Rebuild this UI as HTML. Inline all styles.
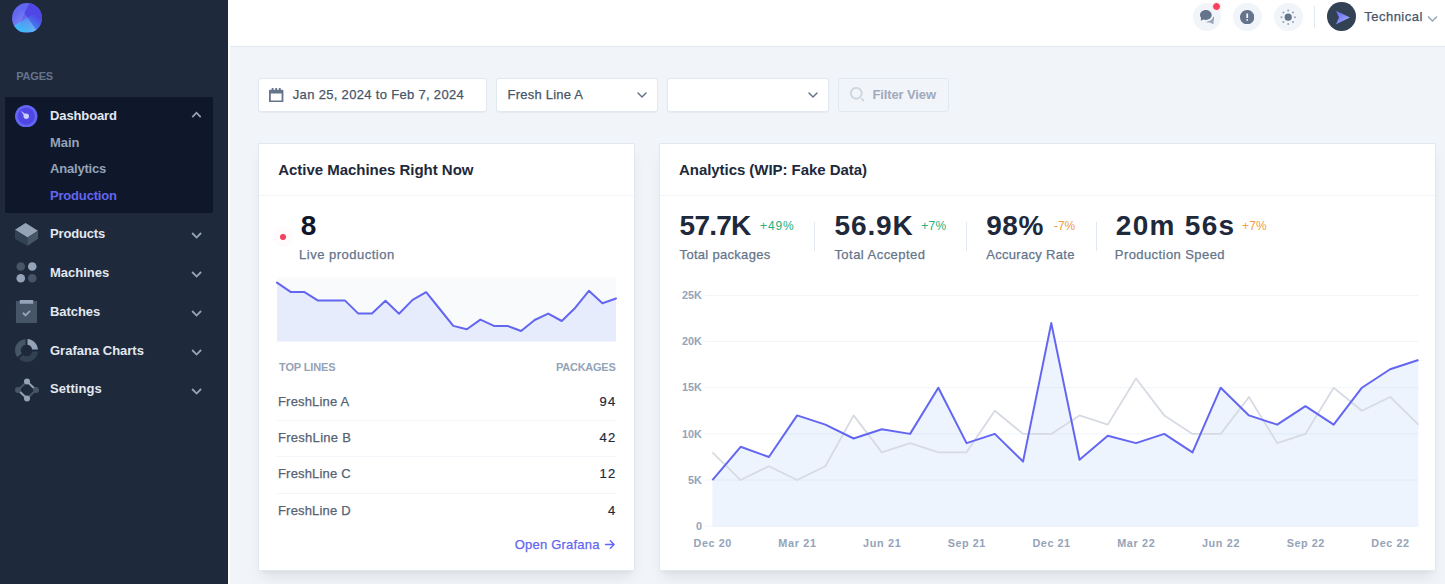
<!DOCTYPE html>
<html><head><meta charset="utf-8"><title>Dashboard</title>
<style>
html,body{margin:0;padding:0;width:1445px;height:584px;overflow:hidden;background:#f1f5f9;font-family:'Liberation Sans', sans-serif;}
.a{position:absolute;display:block}
.t{position:absolute;white-space:nowrap;line-height:1;font-family:'Liberation Sans', sans-serif}
</style></head><body>
<!-- sidebar -->
<div class=a style="left:0;top:0;width:228px;height:584px;background:#1e293b"></div>
<div class=a style="left:228px;top:0;width:2px;height:584px;background:#fff"></div>
<!-- logo -->
<svg class=a style="left:12.3px;top:2.5px" width="30" height="30" viewBox="0 0 32 32">
<defs>
<linearGradient x1="28.538%" y1="20.229%" x2="100%" y2="108.156%" id="la"><stop stop-color="#A5B4FC" stop-opacity="0" offset="0%"/><stop stop-color="#A5B4FC" offset="100%"/></linearGradient>
<linearGradient x1="88.638%" y1="29.267%" x2="22.42%" y2="100%" id="lb"><stop stop-color="#38BDF8" stop-opacity="0" offset="0%"/><stop stop-color="#38BDF8" offset="100%"/></linearGradient>
<clipPath id="lc"><rect x="0" y="0" width="32" height="31.2"/></clipPath>
</defs>
<g clip-path="url(#lc)">
<rect fill="#6366F1" width="32" height="32" rx="16"/>
<path d="M18.277.16C26.035 1.267 32 7.938 32 16c0 8.837-7.163 16-16 16a15.937 15.937 0 01-10.426-3.863L18.277.161z" fill="#4F46E5"/>
<path d="M7.404 2.503l18.339 26.19A15.93 15.93 0 0116 32C7.163 32 0 24.837 0 16 0 10.327 2.952 5.344 7.404 2.503z" fill="url(#la)"/>
<path d="M2.223 24.14L29.777 7.86A15.926 15.926 0 0132 16c0 8.837-7.163 16-16 16-5.864 0-10.991-3.154-13.777-7.86z" fill="url(#lb)"/>
</g></svg>
<!-- active group box -->
<div class=a style="left:5px;top:97px;width:208px;height:116px;background:#0f172a;border-radius:1px"></div>
<!-- dashboard icon -->
<svg class=a style="left:15.3px;top:104.9px" width="22.5" height="22.5" viewBox="0 0 24 24">
<path fill="#6366f1" d="M12 0C5.383 0 0 5.383 0 12s5.383 12 12 12 12-5.383 12-12S18.617 0 12 0z"/>
<path fill="#4f46e5" d="M12 3c-4.963 0-9 4.037-9 9s4.037 9 9 9 9-4.037 9-9-4.037-9-9-9z"/>
<path fill="#c7d2fe" d="M12 15c-1.654 0-3-1.346-3-3 0-.462.113-.894.3-1.285L6 6l4.714 3.301A2.973 2.973 0 0112 9c1.654 0 3 1.346 3 3s-1.346 3-3 3z"/>
</svg>
<svg class=a style="left:191px;top:111px" width="10.8" height="10.8" viewBox="0 0 12 12"><path fill="#94a3b8" d="M5.9 11.4L.5 6l1.4-1.4 4 4 4-4L11.3 6z" transform="rotate(180 6 6)"/></svg>
<!-- products cube -->
<svg class=a style="left:15px;top:222.5px" width="23" height="23" viewBox="0 0 24 24">
<path fill="#94a3b8" d="M13 15l11-7L11.504.136a1 1 0 00-1.019.007L0 7l13 8z"/>
<path fill="#334155" d="M13 15L0 7v9c0 .355.189.685.496.864L13 24v-9z"/>
<path fill="#475569" d="M13 15.047V24l10.573-7.181A.999.999 0 0024 16V8l-11 7.047z"/>
</svg>
<!-- machines dots -->
<svg class=a style="left:15px;top:261px" width="23" height="23" viewBox="0 0 24 24">
<circle fill="#475569" cx="6" cy="5.8" r="4.5"/><circle fill="#94a3b8" cx="18" cy="5.8" r="4.5"/>
<circle fill="#94a3b8" cx="6" cy="18" r="4.5"/><circle fill="#475569" cx="18" cy="18" r="4.5"/>
</svg>
<!-- batches clipboard -->
<svg class=a style="left:15px;top:300px" width="23" height="23" viewBox="0 0 24 24">
<path fill="#475569" d="M1 1h22v23H1z"/>
<path fill="#94a3b8" d="M15 10.586L16.414 12 11 17.414 7.586 14 9 12.586l2 2zM5 0h14v4H5z"/>
</svg>
<!-- grafana donut -->
<svg class=a style="left:15px;top:339px" width="23" height="23" viewBox="0 0 24 24">
<path fill="#94a3b8" d="M13 6.068a6.035 6.035 0 0 1 4.932 4.933H24c-.486-5.846-5.154-10.515-11-11v6.067Z"/>
<path fill="#334155" d="M18.007 13c-.474 2.833-2.919 5-5.864 5a5.888 5.888 0 0 1-3.694-1.304L4 20.731C6.131 22.752 8.992 24 12.143 24c6.232 0 11.35-4.851 11.857-11h-5.993Z"/>
<path fill="#475569" d="M6.939 15.007A5.861 5.861 0 0 1 6 11.829c0-2.937 2.167-5.376 5-5.85V0C4.85.507 0 5.614 0 11.83c0 2.695.922 5.174 2.456 7.17l4.483-3.993Z"/>
</svg>
<!-- settings -->
<svg class=a style="left:15px;top:378px" width="24" height="24" viewBox="0 0 24 24">
<g stroke-width="2">
<line x1="3" y1="12" x2="12" y2="3.5" stroke="#475569"/><line x1="21" y1="12" x2="12" y2="20.5" stroke="#475569"/>
<line x1="12" y1="3.5" x2="21" y2="12" stroke="#94a3b8"/><line x1="3" y1="12" x2="12" y2="20.5" stroke="#94a3b8"/>
</g>
<circle fill="#475569" cx="3" cy="12" r="3"/><circle fill="#475569" cx="21" cy="12" r="3"/>
<circle fill="#94a3b8" cx="12" cy="3.5" r="3"/><circle fill="#94a3b8" cx="12" cy="20.5" r="3"/>
</svg>
<svg class=a style='left:190.8px;top:228.29999999999998px' width='11.399999999999999' height='11.399999999999999' viewBox='0 0 12 12'><path fill='#94a3b8' d='M5.9 11.4L.5 6l1.4-1.4 4 4 4-4L11.3 6z'/></svg><svg class=a style='left:190.8px;top:267.3px' width='11.399999999999999' height='11.399999999999999' viewBox='0 0 12 12'><path fill='#94a3b8' d='M5.9 11.4L.5 6l1.4-1.4 4 4 4-4L11.3 6z'/></svg><svg class=a style='left:190.8px;top:306.3px' width='11.399999999999999' height='11.399999999999999' viewBox='0 0 12 12'><path fill='#94a3b8' d='M5.9 11.4L.5 6l1.4-1.4 4 4 4-4L11.3 6z'/></svg><svg class=a style='left:190.8px;top:345.3px' width='11.399999999999999' height='11.399999999999999' viewBox='0 0 12 12'><path fill='#94a3b8' d='M5.9 11.4L.5 6l1.4-1.4 4 4 4-4L11.3 6z'/></svg><svg class=a style='left:190.8px;top:384.3px' width='11.399999999999999' height='11.399999999999999' viewBox='0 0 12 12'><path fill='#94a3b8' d='M5.9 11.4L.5 6l1.4-1.4 4 4 4-4L11.3 6z'/></svg>

<!-- header -->
<div class=a style="left:230px;top:0;width:1215px;height:46px;background:#fff;border-bottom:1px solid #e2e8f0"></div>
<div class=a style="left:1192.6px;top:2.6px;width:28.8px;height:28.8px;border-radius:50%;background:#f1f5f9"></div>
<svg class=a style="left:1199.6px;top:9.6px" width="14.4" height="14.4" viewBox="0 0 16 16">
<path fill="#64748b" d="M6.5 0C2.91 0 0 2.462 0 5.5c0 1.075.37 2.074 1 2.922V12l2.699-1.542A7.454 7.454 0 006.5 11c3.59 0 6.5-2.462 6.5-5.5S10.09 0 6.5 0z"/>
<path fill="#94a3b8" d="M16 9.5c0-.987-.429-1.897-1.147-2.639C14.124 10.348 10.66 13 6.5 13c-.103 0-.202-.018-.305-.021C7.231 13.617 8.556 14 10 14c.449 0 .886-.04 1.307-.11L15 16v-4h-.012C15.627 11.285 16 10.425 16 9.5z"/>
</svg>
<div class=a style="left:1211.8px;top:2.3px;width:7.2px;height:7.2px;border-radius:50%;background:#f43f5e;border:1.3px solid #fff"></div>
<div class=a style="left:1232.9px;top:2.6px;width:28.8px;height:28.8px;border-radius:50%;background:#f1f5f9"></div>
<svg class=a style="left:1240.1px;top:9.6px" width="14.4" height="14.4" viewBox="0 0 16 16">
<path fill="#64748b" d="M8 0C3.6 0 0 3.6 0 8s3.6 8 8 8 8-3.6 8-8-3.6-8-8-8zm1 9H7V4h2v5zm-1 3c-.6 0-1-.4-1-1s.4-1 1-1 1 .4 1 1-.4 1-1 1z"/>
</svg>
<div class=a style="left:1274.2px;top:2.6px;width:28.8px;height:28.8px;border-radius:50%;background:#f1f5f9"></div>
<svg class=a style="left:1281.4px;top:9.6px;overflow:visible" width="14.4" height="14.4" viewBox="0 0 16 16">
<g fill="#94a3b8"><circle cx="8" cy="0.5" r="1.15"/><circle cx="8" cy="15.5" r="1.15"/><circle cx="0.5" cy="8" r="1.15"/><circle cx="15.5" cy="8" r="1.15"/>
<circle cx="2.7" cy="2.7" r="1.15"/><circle cx="13.3" cy="2.7" r="1.15"/><circle cx="2.7" cy="13.3" r="1.15"/><circle cx="13.3" cy="13.3" r="1.15"/></g>
<circle fill="#64748b" cx="8" cy="8" r="4"/>
</svg>
<div class=a style="left:1314.2px;top:6px;width:1px;height:21.6px;background:#e2e8f0"></div>
<div class=a style="left:1327px;top:2.1px;width:28.8px;height:28.8px;border-radius:50%;background:#334155"></div>
<svg class=a style="left:1335px;top:9.5px" width="16" height="15" viewBox="0 0 16 15">
<defs><linearGradient id="pa" x1="0" y1="0" x2="1" y2="1"><stop offset="0" stop-color="#6366f1"/><stop offset="1" stop-color="#a5b4fc"/></linearGradient></defs>
<path fill="url(#pa)" d="M1 0.7L15 7.5 1 14.3 4 7.5z"/>
</svg>
<svg class=a style="left:1427px;top:15px" width="11" height="8" viewBox="0 0 11 8"><path d="M1 1.5l4.5 4.5 4.5-4.5" fill="none" stroke="#94a3b8" stroke-width="1.4"/></svg>

<!-- filters -->
<div class=a style="left:258px;top:77.5px;width:227.3px;height:32.5px;background:#fff;border:1px solid #e2e8f0;border-radius:3px;box-shadow:0 1px 1px rgba(0,0,0,0.04)"></div>
<svg class=a style="left:269.2px;top:87.5px" width="14.4" height="14.4" viewBox="0 0 16 16"><path fill="#64748b" d="M15 2h-2V0h-2v2H9V0H7v2H5V0H3v2H1a1 1 0 00-1 1v12a1 1 0 001 1h14a1 1 0 001-1V3a1 1 0 00-1-1zm-1 12H2V6h12v8z"/></svg>
<div class=a style="left:496.3px;top:77.5px;width:159.7px;height:32.5px;background:#fff;border:1px solid #e2e8f0;border-radius:3px;box-shadow:0 1px 1px rgba(0,0,0,0.04)"></div>
<svg class=a style="left:632px;top:84.5px" width="20" height="20" viewBox="0 0 20 20"><path d="M6 8l4 4 4-4" fill="none" stroke="#64748b" stroke-width="1.5" stroke-linecap="round" stroke-linejoin="round"/></svg>
<div class=a style="left:667px;top:77.5px;width:159.8px;height:32.5px;background:#fff;border:1px solid #e2e8f0;border-radius:3px;box-shadow:0 1px 1px rgba(0,0,0,0.04)"></div>
<svg class=a style="left:802.8px;top:84.5px" width="20" height="20" viewBox="0 0 20 20"><path d="M6 8l4 4 4-4" fill="none" stroke="#64748b" stroke-width="1.5" stroke-linecap="round" stroke-linejoin="round"/></svg>
<div class=a style="left:838px;top:77.5px;width:108.8px;height:32.9px;border:1px solid #e2e8f0;border-radius:3px"></div>
<svg class=a style="left:850px;top:87.2px" width="14.4" height="14.4" viewBox="0 0 16 16"><path fill="#cbd5e1" d="M7 14c-3.86 0-7-3.14-7-7s3.14-7 7-7 7 3.14 7 7-3.14 7-7 7zM7 2C4.243 2 2 4.243 2 7s2.243 5 5 5 5-2.243 5-5-2.243-5-5-5z"/><path fill="#cbd5e1" d="M15.707 14.293L13.314 11.9a8.019 8.019 0 01-1.414 1.414l2.393 2.393a.997.997 0 001.414 0 .999.999 0 000-1.414z"/></svg>

<!-- cards -->
<div class=a style="left:257.6px;top:142.6px;width:375.4px;height:426.4px;background:#fff;border:1px solid #e2e8f0;border-radius:1px;box-shadow:0 9px 13px -3px rgba(0,0,0,0.08),0 4px 5px -4px rgba(0,0,0,0.08)"></div>
<div class=a style="left:259px;top:195px;width:375px;height:1px;background:#f1f5f9"></div>
<div class=a style="left:658.6px;top:142.6px;width:775.4px;height:426.4px;background:#fff;border:1px solid #e2e8f0;border-radius:1px;box-shadow:0 9px 13px -3px rgba(0,0,0,0.08),0 4px 5px -4px rgba(0,0,0,0.08)"></div>
<div class=a style="left:660px;top:195px;width:775px;height:1px;background:#f1f5f9"></div>

<!-- live dot -->
<div class=a style="left:273.3px;top:226.7px;width:20px;height:20px;border-radius:50%;background:rgba(244,63,94,0.025)"></div>
<div class=a style="left:280.3px;top:233.7px;width:6px;height:6px;border-radius:50%;background:#f43f5e"></div>

<!-- sparkline -->
<svg class=a style="left:0;top:0" width="1445" height="584">
<rect x="277" y="277.5" width="339" height="64" fill="#f8fafc"/>
<path d="M277,341.5 L277.00,282.60 L290.56,291.90 L304.12,291.90 L317.68,300.40 L331.24,300.40 L344.80,300.40 L358.36,313.60 L371.92,313.60 L385.48,300.80 L399.04,313.80 L412.60,299.90 L426.16,292.20 L439.72,309.00 L453.28,325.90 L466.84,329.20 L480.40,319.60 L493.96,325.90 L507.52,325.90 L521.08,331.00 L534.64,320.00 L548.20,313.60 L561.76,321.00 L575.32,307.70 L588.88,290.80 L602.44,303.20 L616.00,298.50 L616,341.5 Z" fill="#e6ecfb"/>
<polyline points="277.00,282.60 290.56,291.90 304.12,291.90 317.68,300.40 331.24,300.40 344.80,300.40 358.36,313.60 371.92,313.60 385.48,300.80 399.04,313.80 412.60,299.90 426.16,292.20 439.72,309.00 453.28,325.90 466.84,329.20 480.40,319.60 493.96,325.90 507.52,325.90 521.08,331.00 534.64,320.00 548.20,313.60 561.76,321.00 575.32,307.70 588.88,290.80 602.44,303.20 616.00,298.50" fill="none" stroke="#6366f1" stroke-width="2" stroke-linejoin="round" stroke-linecap="round"/>
<path d="M605.5 544.5h8.6M610.3 540.7l3.8 3.8-3.8 3.8" fill="none" stroke="#6366f1" stroke-width="1.4" stroke-linecap="round" stroke-linejoin="round"/>
<line x1="277" x2="616" y1="420.5" y2="420.5" stroke="#f1f5f9"/>
<line x1="277" x2="616" y1="456.5" y2="456.5" stroke="#f1f5f9"/>
<line x1="277" x2="616" y1="493.5" y2="493.5" stroke="#f1f5f9"/>
<!-- kpi dividers -->
<rect x="814" y="222" width="1" height="29" fill="#e2e8f0"/>
<rect x="966" y="222" width="1" height="29" fill="#e2e8f0"/>
<rect x="1096" y="222" width="1" height="29" fill="#e2e8f0"/>
<!-- chart -->
<line x1='705' x2='1418.4' y1='295.40' y2='295.40' stroke='#f1f5f9' stroke-width='1'/><line x1='705' x2='1418.4' y1='341.56' y2='341.56' stroke='#f1f5f9' stroke-width='1'/><line x1='705' x2='1418.4' y1='387.72' y2='387.72' stroke='#f1f5f9' stroke-width='1'/><line x1='705' x2='1418.4' y1='433.88' y2='433.88' stroke='#f1f5f9' stroke-width='1'/><line x1='705' x2='1418.4' y1='480.04' y2='480.04' stroke='#f1f5f9' stroke-width='1'/><line x1='705' x2='1418.4' y1='526.20' y2='526.20' stroke='#f1f5f9' stroke-width='1'/>
<path d="M712.4,526.2 L712.40,480.04 L740.64,446.80 L768.88,456.96 L797.12,415.42 L825.36,424.65 L853.60,438.50 L881.84,429.26 L910.08,433.88 L938.32,387.72 L966.56,443.11 L994.80,433.88 L1023.04,461.58 L1051.28,323.10 L1079.52,459.73 L1107.76,435.73 L1136.00,443.11 L1164.24,433.88 L1192.48,452.34 L1220.72,387.72 L1248.96,415.42 L1277.20,424.65 L1305.44,406.18 L1333.68,424.65 L1361.92,387.72 L1390.16,369.26 L1418.40,360.02 L1418.40,526.2 Z" fill="rgba(59,130,246,0.09)"/>
<polyline points="712.40,452.34 740.64,480.04 768.88,466.19 797.12,480.04 825.36,466.19 853.60,415.42 881.84,452.34 910.08,443.11 938.32,452.34 966.56,452.34 994.80,410.80 1023.04,433.88 1051.28,433.88 1079.52,415.42 1107.76,424.65 1136.00,378.49 1164.24,415.42 1192.48,433.88 1220.72,433.88 1248.96,396.95 1277.20,443.11 1305.44,433.88 1333.68,387.72 1361.92,410.80 1390.16,396.95 1418.40,424.65" fill="none" stroke="#d6dbe3" stroke-width="1.8" stroke-linejoin="round"/>
<polyline points="712.40,480.04 740.64,446.80 768.88,456.96 797.12,415.42 825.36,424.65 853.60,438.50 881.84,429.26 910.08,433.88 938.32,387.72 966.56,443.11 994.80,433.88 1023.04,461.58 1051.28,323.10 1079.52,459.73 1107.76,435.73 1136.00,443.11 1164.24,433.88 1192.48,452.34 1220.72,387.72 1248.96,415.42 1277.20,424.65 1305.44,406.18 1333.68,424.65 1361.92,387.72 1390.16,369.26 1418.40,360.02" fill="none" stroke="#6366f1" stroke-width="2" stroke-linejoin="round"/>
</svg>

<div class=t style="left:16.20px;top:71.29px;font-weight:bold;font-size:11px;color:#64748b;letter-spacing:-0.189px;">PAGES</div><div class=t style="left:50.00px;top:109.00px;font-weight:bold;font-size:13px;color:#e2e8f0;letter-spacing:-0.12px;">Dashboard</div><div class=t style="left:50.00px;top:135.80px;font-weight:bold;font-size:13px;color:#94a3b8;letter-spacing:-0.09px;">Main</div><div class=t style="left:50.00px;top:162.00px;font-weight:bold;font-size:13px;color:#94a3b8;letter-spacing:-0.196px;">Analytics</div><div class=t style="left:50.00px;top:189.00px;font-weight:bold;font-size:13px;color:#6366f1;letter-spacing:-0.185px;">Production</div><div class=t style="left:50.00px;top:226.60px;font-weight:bold;font-size:13px;color:#e2e8f0;letter-spacing:-0.159px;">Products</div><div class=t style="left:50.00px;top:265.90px;font-weight:bold;font-size:13px;color:#e2e8f0;letter-spacing:-0.002px;">Machines</div><div class=t style="left:50.00px;top:305.00px;font-weight:bold;font-size:13px;color:#e2e8f0;letter-spacing:-0.058px;">Batches</div><div class=t style="left:50.00px;top:343.50px;font-weight:bold;font-size:13px;color:#e2e8f0;letter-spacing:0.001px;">Grafana Charts</div><div class=t style="left:50.00px;top:382.40px;font-weight:bold;font-size:13px;color:#e2e8f0;letter-spacing:0.05px;">Settings</div><div class=t style="left:1364.30px;top:9.80px;font-weight:normal;font-size:13px;color:#475569;letter-spacing:0.474px;-webkit-text-stroke:0.25px currentColor">Technical</div><div class=t style="left:292.80px;top:87.90px;font-weight:normal;font-size:13px;color:#475569;letter-spacing:0.319px;-webkit-text-stroke:0.25px currentColor">Jan 25, 2024 to Feb 7, 2024</div><div class=t style="left:507.50px;top:87.90px;font-weight:normal;font-size:13px;color:#475569;letter-spacing:0.224px;-webkit-text-stroke:0.25px currentColor">Fresh Line A</div><div class=t style="left:872.40px;top:87.80px;font-weight:bold;font-size:13px;color:#a1a9bd;letter-spacing:-0.107px;">Filter View</div><div class=t style="left:278.20px;top:161.60px;font-weight:bold;font-size:15px;color:#1e293b;letter-spacing:-0.025px;">Active Machines Right Now</div><div class=t style="left:300.80px;top:212.20px;font-weight:bold;font-size:28px;color:#0f172a;letter-spacing:0.0px;">8</div><div class=t style="left:299.00px;top:248.20px;font-weight:normal;font-size:13px;color:#64748b;letter-spacing:0.504px;-webkit-text-stroke:0.25px currentColor">Live production</div><div class=t style="left:279.00px;top:362.29px;font-weight:bold;font-size:11px;color:#94a3b8;letter-spacing:-0.128px;">TOP LINES</div><div class=t style="left:556.00px;top:362.29px;font-weight:bold;font-size:11px;color:#94a3b8;letter-spacing:-0.256px;">PACKAGES</div><div class=t style="left:278.00px;top:394.80px;font-weight:normal;font-size:13px;color:#556274;letter-spacing:0.178px;-webkit-text-stroke:0.25px currentColor">FreshLine A</div><div class=t style="left:599.60px;top:394.80px;font-weight:normal;font-size:13px;color:#1e293b;letter-spacing:1.17px;-webkit-text-stroke:0.2px currentColor">94</div><div class=t style="left:278.00px;top:430.60px;font-weight:normal;font-size:13px;color:#556274;letter-spacing:0.278px;-webkit-text-stroke:0.25px currentColor">FreshLine B</div><div class=t style="left:599.60px;top:430.60px;font-weight:normal;font-size:13px;color:#1e293b;letter-spacing:1.17px;-webkit-text-stroke:0.2px currentColor">42</div><div class=t style="left:278.00px;top:467.20px;font-weight:normal;font-size:13px;color:#556274;letter-spacing:0.178px;-webkit-text-stroke:0.25px currentColor">FreshLine C</div><div class=t style="left:599.60px;top:467.20px;font-weight:normal;font-size:13px;color:#1e293b;letter-spacing:1.17px;-webkit-text-stroke:0.2px currentColor">12</div><div class=t style="left:278.00px;top:503.70px;font-weight:normal;font-size:13px;color:#556274;letter-spacing:0.178px;-webkit-text-stroke:0.25px currentColor">FreshLine D</div><div class=t style="left:608.00px;top:503.70px;font-weight:normal;font-size:13px;color:#1e293b;letter-spacing:0.0px;-webkit-text-stroke:0.2px currentColor">4</div><div class=t style="left:514.80px;top:538.00px;font-weight:normal;font-size:13px;color:#6366f1;letter-spacing:0.204px;-webkit-text-stroke:0.25px currentColor">Open Grafana</div><div class=t style="left:679.00px;top:161.60px;font-weight:bold;font-size:15px;color:#1e293b;letter-spacing:-0.049px;">Analytics (WIP: Fake Data)</div><div class=t style="left:679.60px;top:212.30px;font-weight:bold;font-size:28px;color:#1e293b;letter-spacing:-0.774px;">57.7K</div><div class=t style="left:760.00px;top:219.84px;font-weight:normal;font-size:12px;color:#25b07c;letter-spacing:0.882px;">+49%</div><div class=t style="left:679.60px;top:248.40px;font-weight:normal;font-size:13px;color:#64748b;letter-spacing:0.298px;-webkit-text-stroke:0.25px currentColor">Total packages</div><div class=t style="left:834.40px;top:212.30px;font-weight:bold;font-size:28px;color:#1e293b;letter-spacing:0.926px;">56.9K</div><div class=t style="left:921.30px;top:219.84px;font-weight:normal;font-size:12px;color:#25b07c;letter-spacing:0.259px;">+7%</div><div class=t style="left:834.40px;top:248.40px;font-weight:normal;font-size:13px;color:#64748b;letter-spacing:0.466px;-webkit-text-stroke:0.25px currentColor">Total Accepted</div><div class=t style="left:986.20px;top:212.30px;font-weight:bold;font-size:28px;color:#1e293b;letter-spacing:0.528px;">98%</div><div class=t style="left:1054.00px;top:219.84px;font-weight:normal;font-size:12px;color:#f09c45;letter-spacing:-0.085px;">-7%</div><div class=t style="left:986.20px;top:248.40px;font-weight:normal;font-size:13px;color:#64748b;letter-spacing:0.308px;-webkit-text-stroke:0.25px currentColor">Accuracy Rate</div><div class=t style="left:1115.80px;top:212.30px;font-weight:bold;font-size:28px;color:#1e293b;letter-spacing:1.289px;">20m 56s</div><div class=t style="left:1242.00px;top:219.84px;font-weight:normal;font-size:12px;color:#f09c45;letter-spacing:0.159px;">+7%</div><div class=t style="left:1114.80px;top:248.40px;font-weight:normal;font-size:13px;color:#64748b;letter-spacing:0.425px;-webkit-text-stroke:0.25px currentColor">Production Speed</div><div class=t style="left:681.99px;top:290.16px;font-weight:bold;font-size:10.8px;color:#94a3b8;letter-spacing:0.0px;">25K</div><div class=t style="left:681.99px;top:336.32px;font-weight:bold;font-size:10.8px;color:#94a3b8;letter-spacing:0.0px;">20K</div><div class=t style="left:681.99px;top:382.48px;font-weight:bold;font-size:10.8px;color:#94a3b8;letter-spacing:0.0px;">15K</div><div class=t style="left:681.99px;top:428.64px;font-weight:bold;font-size:10.8px;color:#94a3b8;letter-spacing:0.0px;">10K</div><div class=t style="left:688.00px;top:474.80px;font-weight:bold;font-size:10.8px;color:#94a3b8;letter-spacing:0.0px;">5K</div><div class=t style="left:696.00px;top:520.96px;font-weight:bold;font-size:10.8px;color:#94a3b8;letter-spacing:0.0px;">0</div><div class=t style="left:693.60px;top:538.26px;font-weight:bold;font-size:10.8px;color:#94a3b8;letter-spacing:0.558px;">Dec 20</div><div class=t style="left:778.32px;top:538.26px;font-weight:bold;font-size:10.8px;color:#94a3b8;letter-spacing:0.679px;">Mar 21</div><div class=t style="left:863.04px;top:538.26px;font-weight:bold;font-size:10.8px;color:#94a3b8;letter-spacing:0.68px;">Jun 21</div><div class=t style="left:947.76px;top:538.26px;font-weight:bold;font-size:10.8px;color:#94a3b8;letter-spacing:0.559px;">Sep 21</div><div class=t style="left:1032.48px;top:538.26px;font-weight:bold;font-size:10.8px;color:#94a3b8;letter-spacing:0.558px;">Dec 21</div><div class=t style="left:1117.20px;top:538.26px;font-weight:bold;font-size:10.8px;color:#94a3b8;letter-spacing:0.679px;">Mar 22</div><div class=t style="left:1201.92px;top:538.26px;font-weight:bold;font-size:10.8px;color:#94a3b8;letter-spacing:0.68px;">Jun 22</div><div class=t style="left:1286.64px;top:538.26px;font-weight:bold;font-size:10.8px;color:#94a3b8;letter-spacing:0.559px;">Sep 22</div><div class=t style="left:1371.36px;top:538.26px;font-weight:bold;font-size:10.8px;color:#94a3b8;letter-spacing:0.558px;">Dec 22</div>
</body></html>
